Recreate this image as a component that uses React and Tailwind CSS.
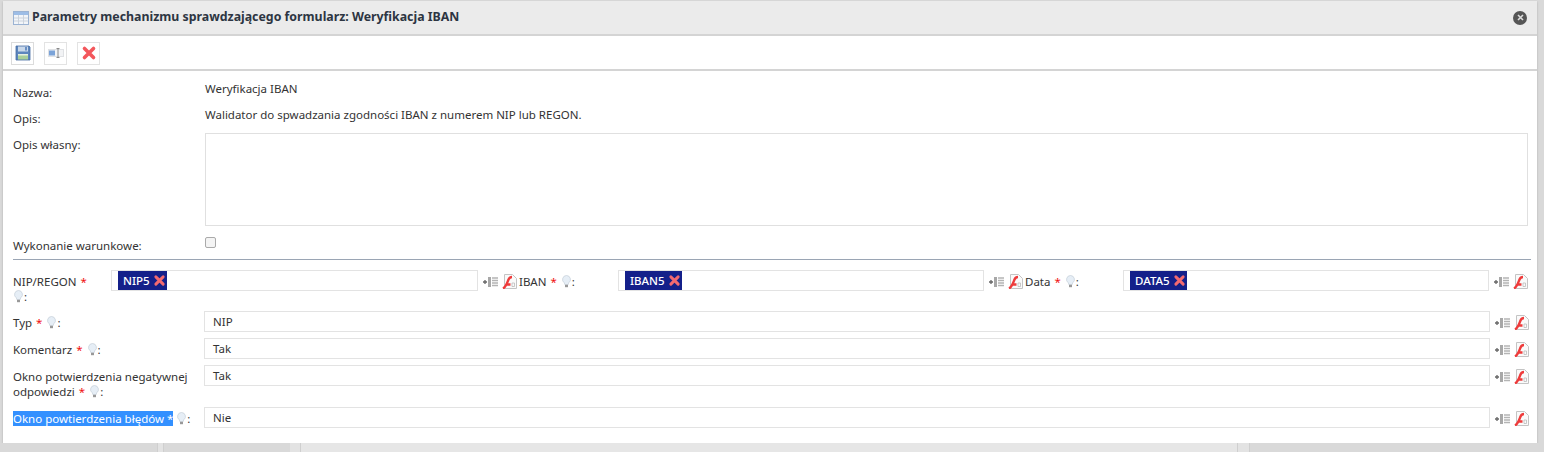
import React from 'react';

function TableIcon() {
  return (
    <svg width="16" height="16" viewBox="0 0 16 16" className="shrink-0">
      <rect x="0.5" y="1.5" width="15" height="13" fill="#f2f5f9" stroke="#9bb3d3" />
      <rect x="1" y="2" width="14" height="3" fill="#9dbde6" />
      <path d="M1 8h14M1 11h14M5.5 5v9M10.5 5v9" stroke="#ccd3dc" strokeWidth="1" />
    </svg>
  );
}

function SaveIcon() {
  return (
    <svg width="16" height="16" viewBox="0 0 16 16">
      <path d="M1 1h13l1 1v13H1z" fill="#5d86bd" stroke="#466da3" strokeWidth="0.8" />
      <rect x="3" y="1.5" width="10" height="5" fill="#c9d8ea" />
      <rect x="10" y="2" width="2" height="3.5" fill="#6a90c4" />
      <rect x="3" y="9" width="10" height="5.5" fill="#a9cf9a" />
      <rect x="3" y="9" width="10" height="1.5" fill="#e6efe0" />
    </svg>
  );
}

function FieldIcon() {
  return (
    <svg width="16" height="12" viewBox="0 0 16 12">
      <rect x="0.5" y="2.5" width="15" height="7" fill="#f2f3f5" stroke="#dfe1e4" />
      <rect x="1" y="3.5" width="6" height="5" fill="#7ba3d8" />
      <path d="M8.5 1.5h3M8.5 10.5h3M10 1.5v9" stroke="#8a8a8a" strokeWidth="1" fill="none" />
    </svg>
  );
}

function RedX({ size = 16, color = '#f3575c' }) {
  return (
    <svg width={size} height={size} viewBox="0 0 16 16">
      <path d="M3.5 3.5l9 9M12.5 3.5l-9 9" stroke={color} strokeWidth="3.6" strokeLinecap="round" />
    </svg>
  );
}

function Bulb() {
  return (
    <svg width="9" height="13" viewBox="0 0 9 13" className="inline-block align-[-2px] mx-[1px]">
      <path d="M4.5 0.5a4 4 0 0 1 2.2 7.3L6.2 9.5H2.8l-.5-1.7A4 4 0 0 1 4.5 .5z" fill="#e6eef6" stroke="#c4ced8" strokeWidth="0.7" />
      <rect x="3" y="9.8" width="3" height="2.4" fill="#999" />
    </svg>
  );
}

function Star() {
  return <span className="text-[#f01010] mx-[1px]">*</span>;
}

// the two small icons right of every field
function FieldTools() {
  return (
    <div className="flex items-center w-[34px] shrink-0 ml-[5px] gap-[4px] h-[21px] pt-[2px]">
      <svg width="15" height="12" viewBox="0 0 15 12" className="shrink-0">
        <path d="M0 6h4M2 4v4" stroke="#666" strokeWidth="1.3" />
        <rect x="5" y="1" width="3" height="10" fill="#a8a8a8" />
        <path d="M9 2h6M9 4.5h6M9 7h6M9 9.5h6" stroke="#b4b4b4" strokeWidth="1.4" />
      </svg>
      <svg width="15" height="15" viewBox="0 0 15 15" className="shrink-0">
        <path d="M2.5 .5h8l4 4v10h-12z" fill="#fafafa" stroke="#c4c4c4" />
        <path d="M1 14.5C4 13 5.5 8 6.5 5.5c.7-1.6 2-2.5 3.5-2.5M3.5 10.5h5" stroke="#ee3b3b" strokeWidth="2.4" fill="none" />
        <path d="M10 9h2.5v3.5H10z" fill="none" stroke="#bbb" strokeWidth="0.8" />
      </svg>
    </div>
  );
}

function TagInput({ text, width }) {
  return (
    <div className={`${width} h-[21px] border border-[#e3e3e3] bg-white pl-[6px] flex items-start shrink-0`}>
      <span className="flex items-center h-[19px] bg-[#14208a] text-white pl-[5px] pr-[1px] gap-[3px] font-medium">
        {text}
        <RedX size={13} color="#f36a70" />
      </span>
    </div>
  );
}

function TextRow({ label, value, className }) {
  return (
    <div className={`flex items-start ${className}`}>
      <div className="w-[191px] shrink-0 leading-[15px] pt-[4px]">{label}</div>
      <div className="flex-1 h-[21px] border border-[#e3e3e3] bg-white pl-[8px] leading-[19px]">{value}</div>
      <FieldTools />
    </div>
  );
}

export default function App() {
  return (
    <div className="w-[1544px] h-[452px] bg-[#d9d9d9] overflow-hidden pt-[1px] text-[#333] text-[11.5px]" style={{ fontFamily: '"Noto Sans", Tahoma, sans-serif' }}>
      <div className="ml-[3px] w-[1534px] h-[442px] bg-white shadow-[0_1px_2px_rgba(0,0,0,0.2)]">
        <div className="h-[35px] bg-[#ebebeb] border-b-2 border-[#d4d4d4] flex items-center pl-[10px] pr-[10px] gap-[3px]">
          <TableIcon />
          <span className="flex-1 font-bold text-[#2d3542] text-[12.35px]">Parametry mechanizmu sprawdzającego formularz: Weryfikacja IBAN</span>
          <span className="w-[14px] h-[14px] rounded-full bg-[#555] flex items-center justify-center">
            <svg width="7" height="7" viewBox="0 0 7 7"><path d="M1 1l5 5M6 1l-5 5" stroke="#ddd" strokeWidth="1.6" /></svg>
          </span>
        </div>

        <div className="h-[35px] border-b-2 border-[#d4d4d4] flex items-center pl-[8px] gap-[10px] pt-[1px]">
          <button className="w-[23px] h-[23px] border border-[#dcdcdc] flex items-center justify-center"><SaveIcon /></button>
          <button className="w-[23px] h-[23px] border border-[#e3e3e3] flex items-center justify-center"><FieldIcon /></button>
          <button className="w-[23px] h-[23px] border border-[#e3e3e3] flex items-center justify-center"><RedX /></button>
        </div>

        <div className="pl-[10px] pr-[8px]">
          <div className="flex pt-[9px] h-[35px]">
            <div className="w-[192px] pt-[4px]">Nazwa:</div>
            <div>Weryfikacja IBAN</div>
          </div>
          <div className="flex h-[27px]">
            <div className="w-[192px] pt-[4px]">Opis:</div>
            <div>Walidator do spwadzania zgodności IBAN z numerem NIP lub REGON.</div>
          </div>
          <div className="flex h-[103px]">
            <div className="w-[192px] pt-[3px]">Opis własny:</div>
            <div className="w-[1323px] h-[93px] border border-[#e0e0e0]" />
          </div>
          <div className="flex h-[23px]">
            <div className="w-[192px] pt-[1px]">Wykonanie warunkowe:</div>
            <div className="w-[11px] h-[11px] mt-[1px] rounded-[2px] border border-[#aaa] bg-[#f4f4f4]" />
          </div>
          <div className="border-t border-[#9aa5b4] w-[1518px] mb-[10px]" />

          <div className="flex items-start h-[41px]">
            <div className="w-[98px] shrink-0 leading-[15px] pt-[4px]">NIP/REGON <Star /><br /><Bulb />:</div>
            <TagInput text="NIP5" width="w-[367px]" />
            <FieldTools />
            <div className="w-[99px] shrink-0 ml-[2px] leading-[15px] pt-[4px]">IBAN <Star /> <Bulb />:</div>
            <TagInput text="IBAN5" width="w-[366px]" />
            <FieldTools />
            <div className="w-[98px] shrink-0 ml-[2px] leading-[15px] pt-[4px]">Data <Star /> <Bulb />:</div>
            <TagInput text="DATA5" width="w-[366px]" />
            <FieldTools />
          </div>

          <TextRow label={<>Typ <Star /> <Bulb />:</>} value="NIP" className="h-[27px]" />
          <TextRow label={<>Komentarz <Star /> <Bulb />:</>} value="Tak" className="h-[27px]" />
          <TextRow label={<><span>Okno potwierdzenia negatywnej</span><br /><span>odpowiedzi</span> <Star /> <Bulb />:</>} value="Tak" className="h-[42px]" />
          <TextRow label={<><span className="bg-[#3390ff] text-white">Okno powtierdzenia błędów *</span> <Bulb />:</>} value="Nie" className="h-[27px]" />
        </div>
      </div>

      {/* what shows of the page behind the dialog */}
      <div className="flex h-[9px] bg-[#d9d9d9]">
        <div className="w-[158px] border-r border-[#cfcfcf]" />
        <div className="w-[6px] bg-[#e3e3e3] border-r border-[#cfcfcf]" />
        <div className="w-[126px]" />
        <div className="w-[11px] bg-[#e3e3e3] border-r border-[#cfcfcf]" />
        <div className="w-[937px] bg-[#e6e6e6] border-r border-[#cfcfcf]" />
        <div className="w-[12px] bg-[#e3e3e3] border-r border-[#cfcfcf]" />
      </div>
    </div>
  );
}
